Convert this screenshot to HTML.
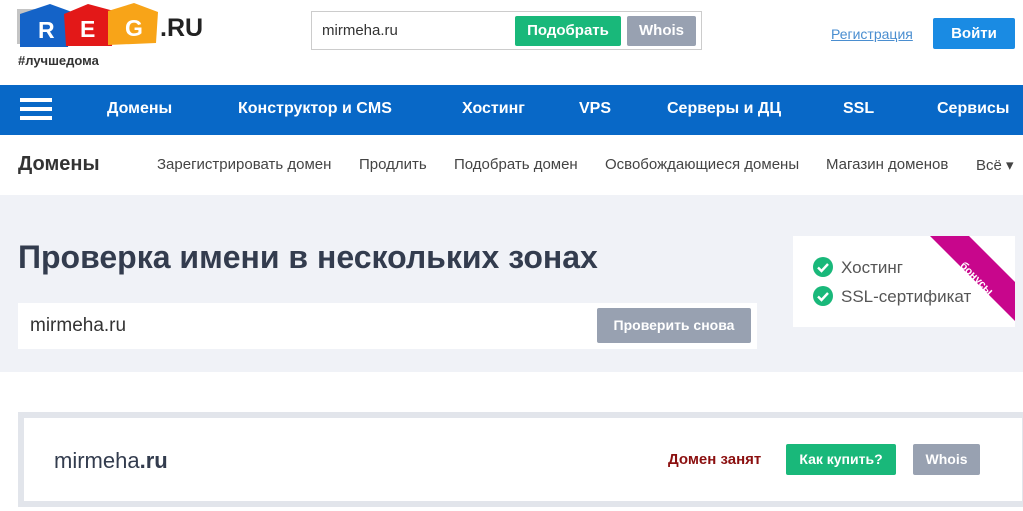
<!DOCTYPE html>
<html><head><meta charset="utf-8"><style>
*{margin:0;padding:0;box-sizing:border-box}
body{width:1023px;height:511px;overflow:hidden;font-family:"Liberation Sans",Arial,sans-serif;background:#fff;position:relative}
.a{position:absolute}
.btn{position:absolute;color:#fff;font-weight:bold;font-size:15px;text-align:center;border-radius:2px}
</style></head><body>
<!-- logo -->
<svg class="a" style="left:0;top:0" width="220" height="52" viewBox="0 0 220 52">
<polygon points="17,9 40,9 40,44 17,44" fill="#c4c4c4"/>
<polygon points="20,14 50,4 72,12 68,47 20,47" fill="#1463c8"/>
<polygon points="64,14 88,4 114,11 112,46 66,46" fill="#e31818"/>
<polygon points="108,11 134,3 158,12 156,43 108,45" fill="#f8a418"/>
<text x="38" y="38" fill="#fff" font-size="23" font-weight="bold" font-family="Liberation Sans">R</text>
<text x="80" y="37" fill="#fff" font-size="23" font-weight="bold" font-family="Liberation Sans">E</text>
<text x="125" y="36" fill="#fff" font-size="23" font-weight="bold" font-family="Liberation Sans">G</text>
<text x="160" y="36" fill="#222" font-size="25" font-weight="bold" font-family="Liberation Sans">.RU</text>
</svg>
<div class="a" style="left:18px;top:53px;font-size:13px;font-weight:bold;color:#333">#лучшедома</div>
<!-- search -->
<div class="a" style="left:311px;top:11px;width:391px;height:39px;border:1px solid #ccc"></div>
<div class="a" style="left:322px;top:22px;font-size:15px;color:#333">mirmeha.ru</div>
<div class="btn" style="left:515px;top:16px;width:106px;height:30px;line-height:30px;background:#19b87a">Подобрать</div>
<div class="btn" style="left:627px;top:16px;width:69px;height:30px;line-height:30px;background:#98a1b1">Whois</div>
<div class="a" style="left:831px;top:26px;font-size:14px;color:#4a8ed0;text-decoration:underline">Регистрация</div>
<div class="btn" style="left:933px;top:18px;width:82px;height:31px;line-height:31px;background:#1a8be3">Войти</div>
<!-- blue nav -->
<div class="a" style="left:0;top:85px;width:1023px;height:50px;background:#0868c7"></div>
<div class="a" style="left:20px;top:98px;width:32px;height:4px;background:#fff;box-shadow:0 9px 0 #fff,0 18px 0 #fff"></div>
<div class="a" style="top:100px;left:0;width:1023px;color:#fff;font-weight:bold;font-size:16px">
<span class="a" style="left:107px">Домены</span><span class="a" style="left:238px;white-space:nowrap">Конструктор и CMS</span><span class="a" style="left:462px">Хостинг</span><span class="a" style="left:579px">VPS</span><span class="a" style="left:667px;white-space:nowrap">Серверы и ДЦ</span><span class="a" style="left:843px">SSL</span><span class="a" style="left:937px">Сервисы</span></div>
<!-- sub nav -->
<div class="a" style="left:18px;top:153px;font-size:20px;font-weight:bold;color:#333">Домены</div>
<div class="a" style="top:156px;left:0;width:1023px;font-size:15px;color:#444">
<span class="a" style="left:157px;white-space:nowrap">Зарегистрировать домен</span><span class="a" style="left:359px">Продлить</span><span class="a" style="left:454px;white-space:nowrap">Подобрать домен</span><span class="a" style="left:605px;white-space:nowrap">Освобождающиеся домены</span><span class="a" style="left:826px;white-space:nowrap">Магазин доменов</span><span class="a" style="left:976px;white-space:nowrap">Всё ▾</span></div>
<!-- grey panel -->
<div class="a" style="left:0;top:195px;width:1023px;height:177px;background:#f0f2f7"></div>
<div class="a" style="left:18px;top:239px;font-size:32px;font-weight:bold;color:#333c4e;white-space:nowrap">Проверка имени в нескольких зонах</div>
<div class="a" style="left:18px;top:303px;width:739px;height:46px;background:#fff"></div>
<div class="a" style="left:30px;top:315px;font-size:19px;color:#333">mirmeha.ru</div>
<div class="btn" style="left:597px;top:308px;width:154px;height:35px;line-height:35px;background:#98a1b1;font-size:14px">Проверить снова</div>
<!-- bonus -->
<div class="a" style="left:793px;top:236px;width:222px;height:91px;background:#fff;overflow:hidden">
<svg class="a" style="left:0;top:0" width="222" height="91"><polygon points="137,0 176,0 222,46 222,85" fill="#c8068c"/>
<text x="0" y="0" transform="translate(184,42) rotate(45)" text-anchor="middle" fill="#fff" font-size="11" font-weight="bold" font-family="Liberation Sans" dy="4">бонусы</text></svg>
<svg class="a" style="left:20px;top:21px" width="20" height="20"><circle cx="10" cy="10" r="10" fill="#19b87a"/><path d="M5 10.5l3.5 3.5 6.5-7" stroke="#fff" stroke-width="2.4" fill="none"/></svg>
<svg class="a" style="left:20px;top:50px" width="20" height="20"><circle cx="10" cy="10" r="10" fill="#19b87a"/><path d="M5 10.5l3.5 3.5 6.5-7" stroke="#fff" stroke-width="2.4" fill="none"/></svg>
<div class="a" style="left:48px;top:22px;font-size:17px;color:#555">Хостинг</div>
<div class="a" style="left:48px;top:51px;font-size:17px;color:#555;white-space:nowrap">SSL-сертификат</div>
</div>
<!-- result -->
<div class="a" style="left:18px;top:412px;width:1010px;height:95px;border:6px solid #e2e5eb;background:#fff"></div>
<div class="a" style="left:54px;top:448px;font-size:22px;color:#333c4e">mirmeha<b>.ru</b></div>
<div class="a" style="left:668px;top:451px;font-size:15px;font-weight:bold;color:#8b0f0f">Домен занят</div>
<div class="btn" style="left:786px;top:444px;width:110px;height:31px;line-height:31px;background:#19b87a;font-size:14px">Как купить?</div>
<div class="btn" style="left:913px;top:444px;width:67px;height:31px;line-height:31px;background:#98a1b1;font-size:14px">Whois</div>
</body></html>
